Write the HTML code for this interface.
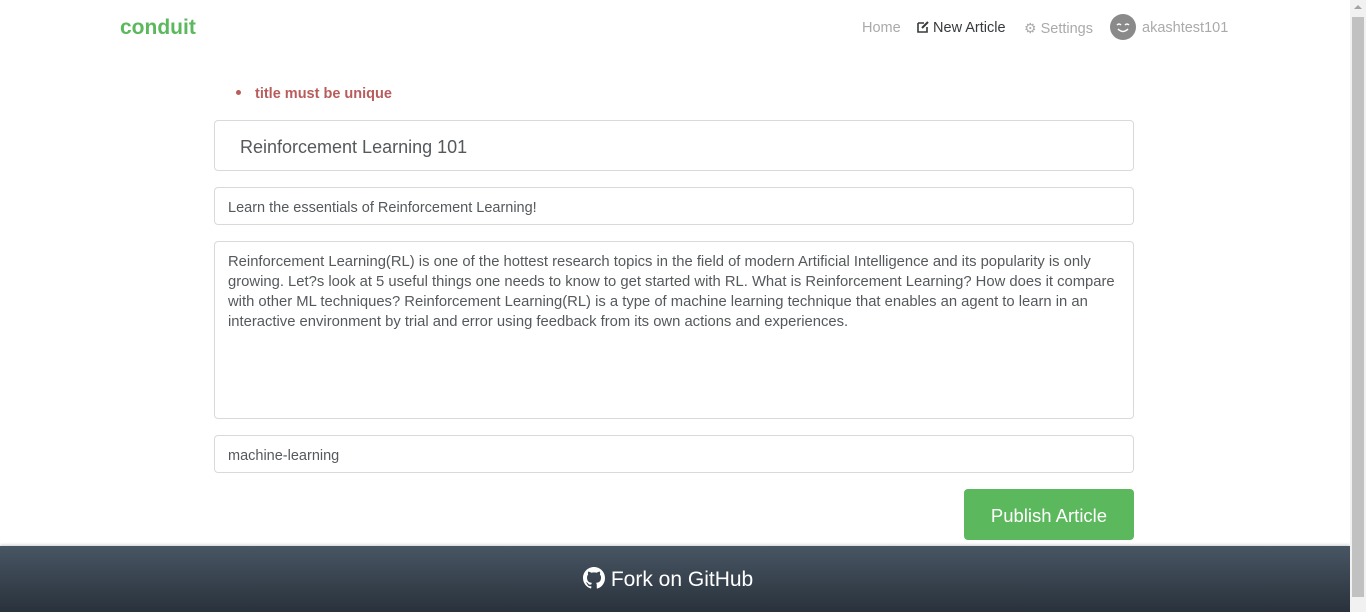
<!DOCTYPE html>
<html><head><meta charset="utf-8"><style>
*{box-sizing:border-box;margin:0;padding:0}
body{width:1366px;height:612px;overflow:hidden;background:#fff;font-family:"Liberation Sans",sans-serif;position:relative}
.sb{position:absolute;right:0;top:0;width:16px;height:612px;background:#f1f1f1}
.sb .th{position:absolute;left:2px;top:17px;width:12px;height:580px;background:#c1c1c1}
.sb .up{position:absolute;left:4px;top:5px;width:0;height:0;border-left:4px solid transparent;border-right:4px solid transparent;border-bottom:4px solid #a3a3a3}
.logo{position:absolute;left:120px;top:16px;color:#5cb85c;font-weight:bold;font-size:21px}
.nav{position:absolute;top:20px;font-size:14.5px;color:#aaa}
.err{position:absolute;left:237px;top:86px;color:#b85c5c;font-weight:bold;font-size:14.5px}
.err:before{content:"";position:absolute;left:0;top:4px;width:5px;height:5px;border-radius:50%;background:#b85c5c;margin-left:-1px}
.err span{margin-left:18px}
.in{position:absolute;left:214px;width:920px;border:1px solid #d9d9d9;border-radius:4px;color:#55595c;font-size:14.5px;padding-left:13px}
.pub{position:absolute;left:964px;top:489px;width:170px;height:51px;background:#5cb85c;border-radius:4px;color:#fff;font-size:18.5px;text-align:center;line-height:53px}
.foot{position:absolute;left:0;top:546px;width:1350px;height:66px;background:linear-gradient(#485563,#29323c);color:#fff;font-size:21px;box-shadow:0 -1px 3px rgba(0,0,0,.2)}
</style></head><body>
<div class="logo">conduit</div>
<div class="nav" style="left:862px">Home</div>
<div class="nav" style="left:917px;color:#373a3c"><svg width="12" height="12" viewBox="0 0 12 12" style="vertical-align:-1px"><path d="M1 2h6M1 2v9h9V6" fill="none" stroke="#373a3c" stroke-width="1.6"/><path d="M5 7l6-6" stroke="#373a3c" stroke-width="2"/></svg> New Article</div>
<div class="nav" style="left:1024px"><span style="font-size:14px">⚙</span> Settings</div>
<div style="position:absolute;left:1110px;top:14px;width:26px;height:26px;border-radius:50%;background:#8a8a8a"><svg width="26" height="26"><path d="M7 11q2-2 4 0M15 11q2-2 4 0M8 15q5 5 10 0" fill="none" stroke="#fff" stroke-width="1.5"/></svg></div>
<div class="nav" style="left:1142px">akashtest101</div>
<div class="err"><span>title must be unique</span></div>
<div class="in" style="top:120px;height:51px;font-size:18px;line-height:52px;padding-left:25px">Reinforcement Learning 101</div>
<div class="in" style="top:187px;height:38px;line-height:40px">Learn the essentials of Reinforcement Learning!</div>
<div class="in" style="top:241px;height:178px;padding-top:10px;line-height:20px;font-size:14.8px;white-space:nowrap;overflow:hidden">Reinforcement Learning(RL) is one of the hottest research topics in the field of modern Artificial Intelligence and its popularity is only<br>growing. Let?s look at 5 useful things one needs to know to get started with RL. What is Reinforcement Learning? How does it compare<br>with other ML techniques? Reinforcement Learning(RL) is a type of machine learning technique that enables an agent to learn in an<br>interactive environment by trial and error using feedback from its own actions and experiences.</div>
<div class="in" style="top:435px;height:38px;line-height:40px">machine-learning</div>
<div class="pub">Publish Article</div>
<div class="foot"><div style="position:absolute;left:583px;top:21px;"><svg width="22" height="22" viewBox="0 0 16 16" style="vertical-align:-3px"><path fill="#fff" d="M8 0C3.58 0 0 3.58 0 8c0 3.540 2.29 6.53 5.47 7.59.4.07.55-.17.55-.38v-1.33c-2.23.48-2.7-1.070-2.7-1.07-.36-.92-.89-1.17-.89-1.17-.73-.5.06-.49.06-.49.8.06 1.23.83 1.23.83.71 1.22 1.870.87 2.33.66.07-.52.28-.87.51-1.07-1.78-.2-3.64-.89-3.64-3.95 0-.87.31-1.59.82-2.15-.08-.2-.36-1.02.08-2.12 0 0 .67-.21 2.2.82a7.6 7.6 0 0 1 4 0c1.53-1.04 2.2-.82 2.2-.82.44 1.1.16 1.92.08 2.12.51.56.82 1.27.82 2.15 0 3.07-1.87 3.75-3.65 3.95.29.25.54.73.54 1.48v2.2c0 .21.15.46.55.38A8.01 8.01 0 0 0 16 8c0-4.42-3.58-8-8-8z"/></svg> Fork on GitHub</div></div>
<div class="sb"><div class="up"></div><div class="th"></div></div>
</body></html>
